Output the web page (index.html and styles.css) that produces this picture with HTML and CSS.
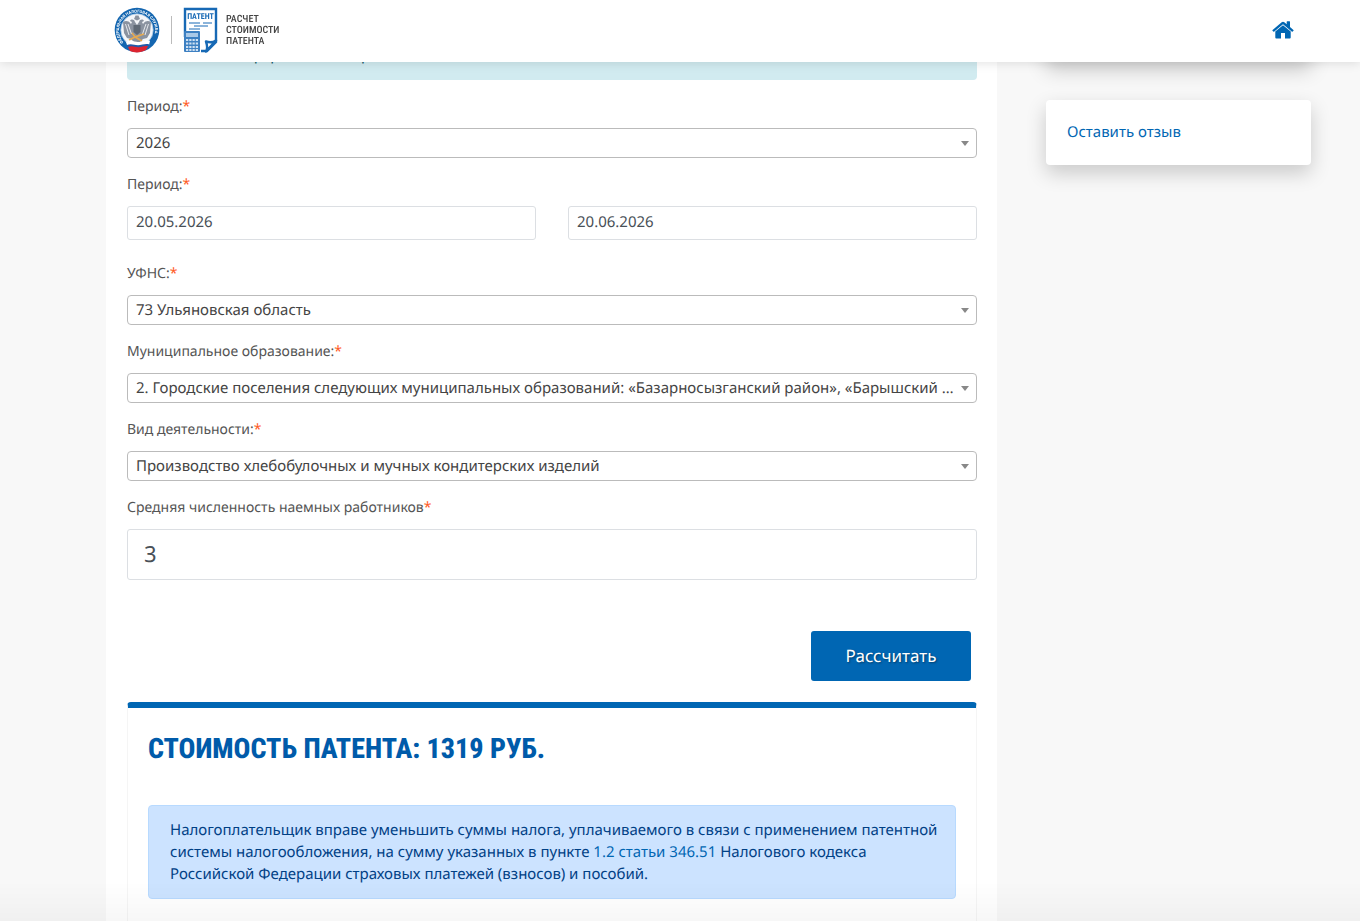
FILE: index.html
```html
<!DOCTYPE html>
<html lang="ru">
<head>
<meta charset="utf-8">
<meta name="viewport" content="width=device-width, initial-scale=1">
<title>Расчет стоимости патента</title>
<link rel="stylesheet" href="styles.css">
</head>
<body>
<header class="topbar">
  <a class="brand" href="#" aria-label="Расчет стоимости патента">
    <svg class="emblem" viewBox="0 0 46 46" aria-hidden="true">
      <defs><path id="ring" d="M10.2 36.2A18 18 0 1 1 35.8 36.2"/></defs>
      <circle cx="23" cy="23" r="22.3" fill="#1466b0"/>
      <circle cx="23" cy="23" r="16" fill="#f4f6f9"/>
      <circle cx="23" cy="23" r="16.2" fill="none" stroke="#b9d2ea" stroke-width=".8"/>
      <text class="ring-text"><textPath href="#ring" startOffset="1">ФЕДЕРАЛЬНАЯ НАЛОГОВАЯ СЛУЖБА</textPath></text>
      <g fill="#8b93a0">
        <path d="M21 15c-1-3-4-3-5-1l2 1-1 2c-3-4-6-3-8-2l1 11 3 5 4 1 3 3h6l3-3 4-1 3-5 1-11c-2-1-5-2-8 2l-1-2 2-1c-1-2-4-2-5 1l-2 3z"/>
        <path d="M20 12l1.500-3.500h3L26 12l-3 1.500z"/>
      </g>
      <path d="M11.500 17l3.500 11M14 17l3.500 10M34.500 17l-3.500 11M32 17l-3.500 10" stroke="#eef1f4" stroke-width=".9" fill="none"/>
      <path d="M19.500 18h7v7l-3.500 3-3.500-3z" fill="#5f6975"/>
      <path d="M15 33l6-3 9-3m-9 3l7 4m-10-8l3 4" fill="none" stroke="#e5a950" stroke-width="1.600"/>
      <path d="M12 35c6-3 9 1 14 0 4-1 6-2 10-1l-1 4H13z" fill="#fff"/>
      <path d="M13 38c5-2 8 1 13 0 4-1 5-1 9-1l-1 3H14z" fill="#2459a8"/>
      <path d="M14 40c5-2 8 1 12 0 4-1 5-1 8-1l-2 4c-5 3-12 3-16 1z" fill="#dc2430"/>
    </svg>
    <span class="divider"></span>
    <svg class="doc" viewBox="0 0 36 46" aria-hidden="true">
      <path d="M2 30V2h31v33l-9 9h-6" fill="#fff" stroke="#1769b5" stroke-width="2.400"/>
      <path d="M23 44.500c2-3 1-7 0-10 3 1 7 1 10-1z" fill="#fff" stroke="#1769b5" stroke-width="2.400" stroke-linejoin="round"/>
      <text x="17.500" y="12" class="doc-text">ПАТЕНТ</text>
      <path d="M6 16h11m3 0h9M11 19h14M6 22h11" stroke="#1769b5" stroke-width="1"/>
      <rect x="1" y="24" width="16" height="21" rx="1" fill="#3d80c2"/>
      <rect x="3" y="26" width="12" height="4" fill="#a9c9e8"/>
      <path d="M3 33h12M3 36.500h12M3 40h12M3 43h12" stroke="#cfe1f3" stroke-width="2" stroke-dasharray="2.250 1"/>
    </svg>
    <span class="brand-name">РАСЧЕТ<br>СТОИМОСТИ<br>ПАТЕНТА</span>
  </a>
  <a class="home" href="#" aria-label="Главная">
    <svg viewBox="0 0 22 18" aria-hidden="true">
      <path d="M11 4.200L3.300 10.600V16.500a.9.900 0 0 0 .9.900H9V12h4v5.400h4.800a.9.900 0 0 0 .9-.9V10.600z"/>
      <path d="M21.400 9L18 6.100V.7a.5.500 0 0 0-.5-.5h-2.300a.5.500 0 0 0-.5.500v2.500L12.300 1.200a2 2 0 0 0-2.600 0L.6 9c-.3.200-.3.500-.1.700l.8.900c.2.200.5.300.7.100L11 3.200l9 7.500c.2.200.5.100.7-.1l.8-.9c.2-.2.200-.5-.1-.7z"/>
    </svg>
  </a>
</header>

<div class="page">
  <main class="content">
    <div class="notice">Начальная информация для расчета</div>
    <form class="form">
      <div class="field">
        <label for="year">Период:<b class="req">*</b></label>
        <div class="select"><select id="year"><option>2026</option></select></div>
      </div>
      <div class="field field-dates">
        <label for="from">Период:<b class="req">*</b></label>
        <div class="dates">
          <input class="input" id="from" type="text" value="20.05.2026">
          <input class="input" type="text" value="20.06.2026" aria-label="Конец периода">
        </div>
      </div>
      <div class="field">
        <label for="ufns">УФНС:<b class="req">*</b></label>
        <div class="select"><select id="ufns"><option>73 Ульяновская область</option></select></div>
      </div>
      <div class="field">
        <label for="mo">Муниципальное образование:<b class="req">*</b></label>
        <div class="select"><select id="mo"><option>2. Городские поселения следующих муниципальных образований: «Базарносызганский район», «Барышский район»</option></select></div>
      </div>
      <div class="field">
        <label for="activity">Вид деятельности:<b class="req">*</b></label>
        <div class="select"><select id="activity"><option>Производство хлебобулочных и мучных кондитерских изделий</option></select></div>
      </div>
      <div class="field">
        <label for="staff">Средняя численность наемных работников<b class="req">*</b></label>
        <input class="input input-large" id="staff" type="text" inputmode="numeric" value="3">
      </div>
      <div class="actions"><button class="submit" type="button">Рассчитать</button></div>
    </form>
    <section class="result">
      <h2>СТОИМОСТЬ ПАТЕНТА: 1319 РУБ.</h2>
      <p class="info">Налогоплательщик вправе уменьшить суммы налога, уплачиваемого в связи с применением патентной системы налогообложения, на сумму указанных в пункте <a href="#">1.2 статьи 346.51</a> Налогового кодекса Российской Федерации страховых платежей (взносов) и пособий.</p>
    </section>
  </main>
  <aside class="side">
    <div class="card card-top"></div>
    <div class="card"><a href="#">Оставить отзыв</a></div>
  </aside>
</div>
</body>
</html>
```
FILE: styles.css
```css
* { box-sizing: border-box; }

html { overflow: hidden; }

body {
  margin: 0;
  background: #f8f8f8;
  color: #444;
  font: 15px/22px "Noto Sans", sans-serif;
  text-rendering: geometricPrecision;
}

a { color: #0066b3; text-decoration: none; }

.topbar {
  position: fixed;
  top: 0;
  left: 0;
  right: 0;
  z-index: 10;
  height: 62px;
  padding: 0 66px 2px 114px;
  display: flex;
  align-items: center;
  justify-content: space-between;
  background: #fff;
  box-shadow: 0 1px 10px rgba(0, 0, 0, .12);
}

.brand { display: flex; align-items: center; color: #444; }
.emblem { width: 46px; height: 46px; }
.ring-text { font: bold 4px "Roboto", sans-serif; fill: #fff; }
.divider { width: 1px; height: 28px; margin: 0 11px; background: #bbb; }
.doc { width: 36px; height: 46px; }
.doc-text { font: bold 8px "Roboto Condensed", "Roboto", sans-serif; fill: #1769b5; text-anchor: middle; }
.brand-name {
  margin-left: 7px;
  font: 500 10px/11px "Roboto Condensed", "Liberation Sans Narrow", Roboto, sans-serif;
}

.home svg { display: block; width: 22px; height: 18px; fill: #0066b3; }

.page {
  display: grid;
  grid-template-columns: minmax(0, 1fr) 265px;
  gap: 49px;
  padding: 0 49px 0 106px;
}

.content {
  min-height: 100vh;
  padding: 30px 20px 0 21px;
  background: #fff;
}

.notice {
  padding: 14px 21px;
  border-radius: 4px;
  background: #d1ebf0;
  color: #0c5460;
}

.form { padding-top: 17px; }
.field { margin-bottom: 17px; }
.field-dates { margin-bottom: 24px; }

.field label {
  display: block;
  margin-bottom: 12px;
  font-size: 14px;
  line-height: 19px;
  color: #555;
}

.req { color: #ff5a1f; font-weight: 400; }

.select { position: relative; }

.select::after {
  content: "";
  position: absolute;
  top: 13px;
  right: 8px;
  border: 4px solid transparent;
  border-top: 5px solid #888;
  border-bottom: 0;
  pointer-events: none;
}

.select select,
.input,
.submit { text-rendering: inherit; }

.select select {
  display: block;
  width: 100%;
  height: 30px;
  padding: 0 22px 0 8px;
  border: 1px solid #bbb;
  border-radius: 4px;
  appearance: none;
  background: #fff;
  color: #444;
  font: inherit;
  text-overflow: ellipsis;
  white-space: nowrap;
  overflow: hidden;
}

.dates { display: grid; grid-template-columns: 1fr 1fr; gap: 32px; }

.input {
  display: block;
  width: 100%;
  height: 34px;
  padding: 0 8px 2px;
  border: 1px solid #dcdfe3;
  border-radius: 3px;
  background: #fff;
  color: #495057;
  font: inherit;
}

.input-large { height: 51px; padding: 0 16px 2px; font-size: 22px; }

.actions { display: flex; justify-content: flex-end; padding: 34px 6px 21px 0; }

.submit {
  width: 160px;
  height: 50px;
  border: 0;
  border-radius: 3px;
  background: #0066b3;
  color: #fff;
  font: 17px/24px "Noto Sans", sans-serif;
  text-shadow: 1px 1px 2px rgba(0, 0, 0, .4);
}

.result {
  padding: 24px 20px 30px;
  border: 1px solid #f5f5f5;
  border-top: 6px solid #0066b3;
  border-radius: 4px 4px 0 0;
}

.result h2 {
  margin: 0 0 39px;
  color: #005baa;
  font: 800 28px/34px "Roboto Condensed", "Liberation Sans Narrow", Roboto, sans-serif;
}

.info {
  margin: 0;
  padding: 13px 16px 13px 21px;
  border: 1px solid #b8daff;
  border-radius: 4px;
  background: #cce3ff;
  color: #004085;
}

.side { display: flex; flex-direction: column; gap: 38px; }

.card {
  min-height: 65px;
  padding: 21px;
  border-radius: 4px;
  background: #fff;
  box-shadow: 0 8px 20px rgba(0, 0, 0, .19);
}

.card-top { min-height: 62px; }

body::after {
  content: "";
  position: fixed;
  left: 0;
  right: 0;
  bottom: 0;
  height: 40px;
  background: linear-gradient(transparent, rgba(0, 0, 0, .03));
  pointer-events: none;
}
```
